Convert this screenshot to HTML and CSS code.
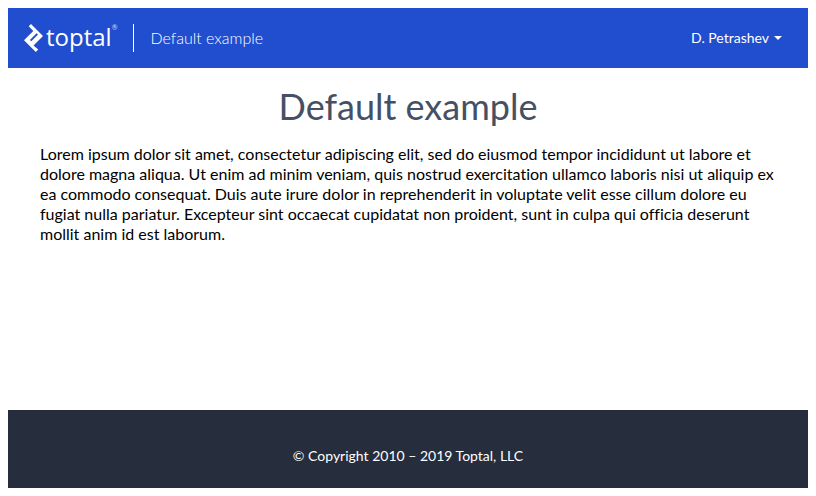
FILE: index.html
```html
<!DOCTYPE html>
<html lang="en">
<head>
<meta charset="utf-8">
<title>Default example</title>
<link rel="stylesheet" href="styles.css">
</head>
<body>
<div class="page">
  <header class="header">
    <a class="logo" href="#" aria-label="Toptal">
      <svg class="logo-mark" viewBox="0 0 20 28" width="20" height="28" aria-hidden="true">
        <path fill="#fff" fill-rule="evenodd" d="M7 0 19 12 9.500 21.500 14.200 25.600 11.800 28 0 16.200 9.300 6.900 4.700 2.300ZM12.600 9.200 5.900 15.900 7.300 17.300 14 10.600Z"/>
      </svg>
      <span class="logo-name">toptal</span><span class="logo-reg">®</span>
    </a>
    <span class="product">Default example</span>
    <button class="user" type="button">D. Petrashev
      <svg viewBox="0 0 8 4" width="8" height="4" aria-hidden="true"><path fill="#fff" d="M0 0h8L4 4z"/></svg>
    </button>
  </header>
  <main class="content">
    <h1>Default example</h1>
    <p>Lorem ipsum dolor sit amet, consectetur adipiscing elit, sed do eiusmod tempor incididunt ut labore et dolore magna aliqua. Ut enim ad minim veniam, quis nostrud exercitation ullamco laboris nisi ut aliquip ex ea commodo consequat. Duis aute irure dolor in reprehenderit in voluptate velit esse cillum dolore eu fugiat nulla pariatur. Excepteur sint occaecat cupidatat non proident, sunt in culpa qui officia deserunt mollit anim id est laborum.</p>
  </main>
  <footer class="footer">© Copyright 2010 – 2019 Toptal, LLC</footer>
</div>
</body>
</html>
```

FILE: styles.css
```css
* { box-sizing: border-box; }
body {
  margin: 0;
  padding: 8px;
  background: #fff;
  color: #000;
  font: 16px/20px Lato, "Liberation Sans", sans-serif;
  font-variant-ligatures: none;
}
.page {
  display: flex;
  flex-direction: column;
  min-height: calc(100vh - 16px);
}
.header {
  display: flex;
  align-items: center;
  padding: 16px 24px 16px 16px;
  background: #204ecf;
  color: #fff;
}
.logo {
  display: flex;
  height: 28px;
  color: #fff;
  text-decoration: none;
}
.logo-name {
  margin-left: 2px;
  font-family: "Open Sans", "Noto Sans", sans-serif;
  font-size: 24px;
  line-height: 26px;
}
.logo-reg { font-size: 7px; line-height: 6px; opacity: 0.8; }
.product {
  margin-left: 16px;
  padding-left: 16px;
  border-left: 1px solid #fff;
  line-height: 28px;
  font-weight: 300;
}
.user {
  display: flex;
  align-items: center;
  gap: 5px;
  margin-left: auto;
  padding: 0 2px;
  border: 0;
  background: none;
  color: #fff;
  font: 14px/20px Lato, "Liberation Sans", sans-serif;
}
.content { flex: 1; padding: 16px 32px; }
h1 {
  margin: 0 0 16px;
  color: #455065;
  font-size: 36px;
  font-weight: 400;
  line-height: 44px;
  text-align: center;
}
p { margin: 0; }
.footer {
  padding: 36px 16px 22px;
  background: #262d3d;
  color: #fff;
  font-size: 14px;
  text-align: center;
}
```
